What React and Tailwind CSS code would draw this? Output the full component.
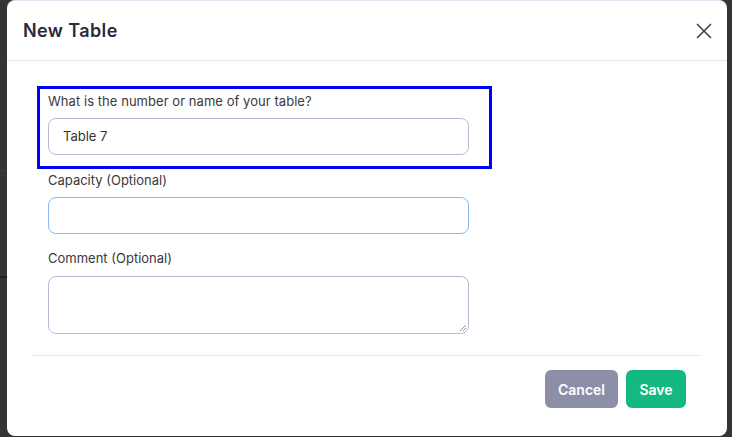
import React from "react";

export default function App() {
  return (
    <div className="relative w-[732px] h-[437px] overflow-hidden bg-[#343434]" style={{ fontFamily: "Inter, 'Noto Sans', sans-serif" }}>
      <div className="absolute left-0 top-[276px] w-[7px] h-[2px] bg-[#1f1f1f]" />
      <div className="absolute left-0 top-[170px] w-[7px] h-px bg-[#3c3c3c]" />
      <div className="absolute left-[7px] top-0 w-[720px] h-[436px] bg-white rounded-[8px] border-t border-[#e6e4f2] flex flex-col">
        <div className="h-[60px] shrink-0 flex items-center justify-between pl-[16px] pr-[14px] border-b border-[#e5e3f0]">
          <h2 className="text-[18px] font-semibold text-[#2a2a3c] tracking-[0.4px]">New Table</h2>
          <svg width="18" height="18" viewBox="0 0 18 18" className="text-[#444]">
            <path d="M2 2 L16 16 M16 2 L2 16" stroke="currentColor" strokeWidth="1.6" fill="none" />
          </svg>
        </div>
        <div className="px-[30px] pt-[25px] flex flex-col">
          <div className="w-[455px] border-[3px] border-[#0000ff] pl-[8px] pt-[3px] pb-[11px]">
            <label className="block text-[13px] leading-[18px] text-[#3a3a3a] tracking-[0.05px]">What is the number or name of your table?</label>
            <div className="mt-[8px] w-[421px] h-[37px] rounded-[8px] border border-[#b9b8d3] flex items-center pl-[14px] text-[13px] text-[#333]">Table 7</div>
          </div>
          <div className="pl-[11px]">
            <label className="block mt-[2px] text-[13px] leading-[18px] text-[#3a3a3a]">Capacity (Optional)</label>
            <div className="mt-[8px] w-[421px] h-[37px] rounded-[8px] border border-[#92b8f2]" />
            <label className="block mt-[15px] text-[13px] leading-[18px] text-[#3a3a3a]">Comment (Optional)</label>
            <div className="relative mt-[9px] w-[421px] h-[58px] rounded-[8px] border border-[#b9b8d3]">
              <svg width="8" height="8" viewBox="0 0 8 8" className="absolute right-[1px] bottom-[1px]">
                <path d="M7 1 L1 7 M7 4 L4 7" stroke="#777" strokeWidth="0.8" />
              </svg>
            </div>
          </div>
        </div>
        <div className="mx-[26px] mt-[21px] border-t border-[#e5e3f0]" />
        <div className="flex justify-end gap-[8px] pr-[41px] pt-[14px]">
          <button className="w-[73px] h-[38px] rounded-[6px] bg-[#8d8fa8] text-white text-[14px] font-semibold">Cancel</button>
          <button className="w-[60px] h-[38px] rounded-[6px] bg-[#13b981] text-white text-[14px] font-semibold">Save</button>
        </div>
      </div>
    </div>
  );
}
